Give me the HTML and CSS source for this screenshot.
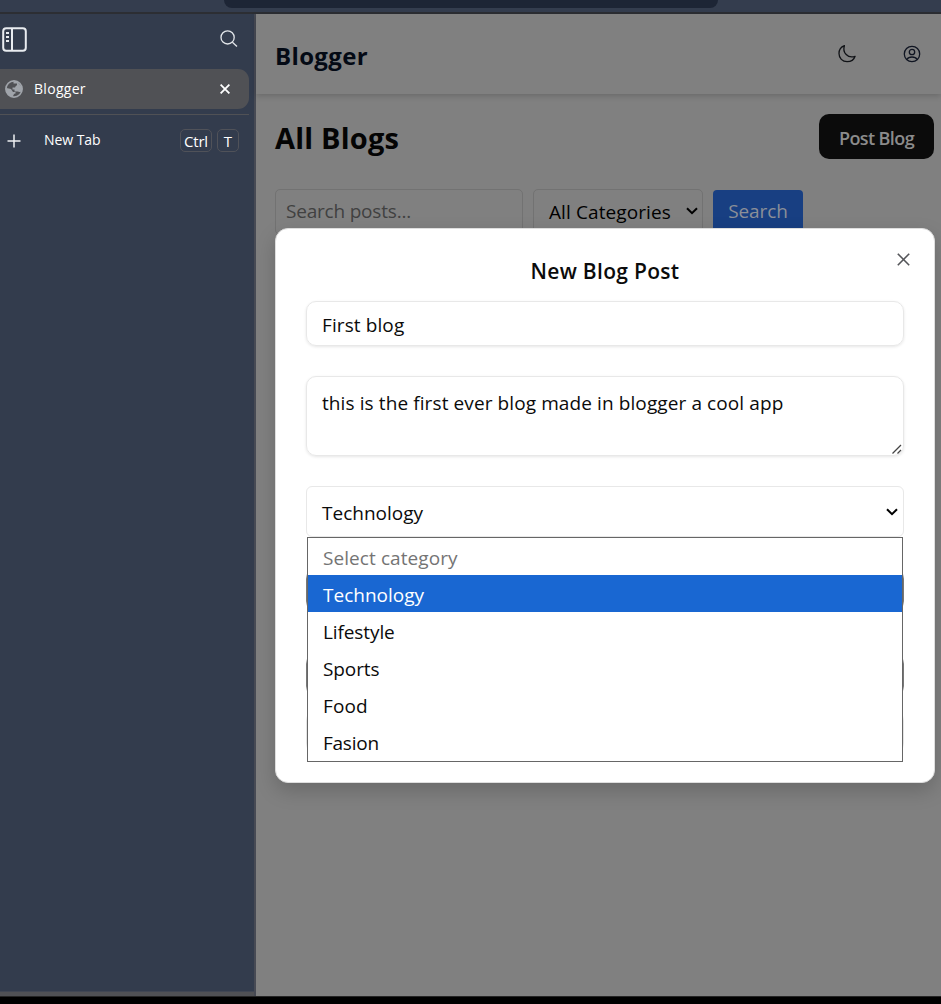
FILE: index.html
```html
<!DOCTYPE html>
<html lang="en">
<head>
<meta charset="utf-8">
<title>Blogger</title>
<link rel="stylesheet" href="styles.css">
</head>
<body>
<div class="topbar"><div class="address"></div></div>
<div class="window">
  <aside class="sidebar">
    <div class="side-tools">
      <svg class="panel-icon" width="26" height="26" viewBox="0 0 26 26" fill="none" stroke="#e9ecf0"><rect x="1.2" y="1.2" width="22.600" height="22.600" rx="3" stroke-width="2"/><path d="M10 1.500v22.500" stroke-width="2"/><path d="M4 6h3M4 10h3M4 14h3" stroke-width="2"/></svg>
      <svg class="search-icon" width="18" height="18" viewBox="0 0 18 18" fill="none" stroke="#e3e6ea" stroke-width="1.3"><circle cx="7.6" cy="7.4" r="6.6"/><path d="M12.4 12.2l4.6 4.3"/></svg>
    </div>
    <div class="tab">
      <svg width="18" height="18" viewBox="0 0 18 18"><circle cx="9" cy="9" r="8.1" fill="#505155" stroke="#a0a4aa" stroke-width="1.7"/><path d="M8.5 1L12 1.5L17 7V11C15 13 14 11.500 12 11.500H9.500V9.500H7.500V7.500H9.500C11 7.500 10 5.500 12 5.500V3.500H8.500ZM1.500 8L6 9L8 12H10.500V13.500C8.500 13.500 9 15 7.500 17C3.500 16 1 13 1 9Z" fill="#a0a4aa"/></svg>
      <span class="tab-name">Blogger</span>
      <svg class="tab-close" width="10" height="10" viewBox="0 0 10 10" stroke="#fff" stroke-width="1.8"><path d="M.6.6l8.800 8.800M9.400.6L.6 9.400"/></svg>
    </div>
    <div class="new-tab">
      <svg width="14" height="14" viewBox="0 0 14 14" stroke="#eef0f2" stroke-width="1.5"><path d="M7 .5v13M.5 7h13"/></svg>
      <span class="new-tab-name">New Tab</span>
      <kbd class="key key-ctrl">Ctrl</kbd><kbd class="key key-t">T</kbd>
    </div>
    <div class="side-foot"></div>
  </aside>
  <main class="page">
    <header class="header">
      <div class="brand">Blogger</div>
      <div class="header-icons">
        <svg width="20" height="20" viewBox="0 0 20 20" fill="none" stroke="#101216" stroke-width="1.3" stroke-linejoin="round"><path d="M7.400 1.700C4 3 2 5.600 2 9.500C2 14.200 5.400 17.700 10.100 17.700C13.700 17.700 17 15.700 18.100 12.300C14.500 13.500 11.400 12.800 9.200 10.500C6.900 8.200 6.300 5 7.400 1.700Z"/></svg>
        <svg width="18" height="18" viewBox="0 0 18 18" fill="none" stroke="#101522" stroke-width="1.3"><circle cx="9" cy="9" r="7.700"/><circle cx="9" cy="7" r="2.700"/><path d="M3.800 14.500C5 12.600 6.900 12 9 12s4 .6 5.200 2.500"/></svg>
      </div>
    </header>
    <section class="content">
      <div class="title-row">
        <h1 class="heading">All Blogs</h1>
        <div class="post-button"><span>Post Blog</span></div>
      </div>
      <div class="filters">
        <div class="search-field"><span>Search posts...</span></div>
        <div class="category-field"><span>All Categories</span><svg width="12" height="8" viewBox="0 0 12 8" fill="none" stroke="#000" stroke-width="2"><path d="M1 1.200l5 5 5-5"/></svg></div>
        <div class="search-button"><span>Search</span></div>
      </div>
    </section>
    <div class="modal">
      <svg class="modal-close" width="13" height="13" viewBox="0 0 13 13" stroke="#55565a" stroke-width="1.6"><path d="M.8.8l11.400 11.400M12.200.8L.8 12.200"/></svg>
      <h2 class="modal-title"><span>New Blog Post</span></h2>
      <div class="input"><span class="t-first">First blog</span></div>
      <div class="textarea"><span class="t-body">this is the first ever blog made in blogger a cool app</span>
        <svg class="grip" width="10" height="10" viewBox="0 0 10 10" stroke="#444" stroke-width="1.300"><path d="M.5 9.500l8.500-8.500M5.500 9.500l3.500-3.500"/></svg>
      </div>
      <div class="select"><span class="t-tech">Technology</span><svg width="12" height="8" viewBox="0 0 12 8" fill="none" stroke="#000" stroke-width="2"><path d="M1 1.200l5 5 5-5"/></svg></div>
      <div class="control"></div>
      <div class="control control-second"></div>
      <div class="control control-last"></div>
      <div class="options">
        <div class="option muted"><span class="t-select">Select category</span></div>
        <div class="option active"><span class="t-tech">Technology</span></div>
        <div class="option"><span class="t-life">Lifestyle</span></div>
        <div class="option"><span class="t-sports">Sports</span></div>
        <div class="option"><span class="t-food">Food</span></div>
        <div class="option"><span class="t-fasion">Fasion</span></div>
      </div>
    </div>
  </main>
</div>
<div class="bottom"></div>
</body>
</html>
```
FILE: styles.css
```css
* { box-sizing: border-box; }
body { margin: 0; width: 941px; height: 1004px; overflow: hidden; display: flex; flex-direction: column; background: #000; font-family: "Open Sans", "Noto Sans", sans-serif; font-size: 19px; }
svg { display: block; flex: none; }
span, .brand, .heading { white-space: nowrap; }
.topbar { height: 14px; flex: none; background: #343d4e; border-bottom: 2px solid #2c2e33; }
.address { width: 494px; height: 8px; margin-left: 224px; background: #1d2535; border-radius: 0 0 9px 9px; }
.window { height: 982px; flex: none; display: flex; }
.sidebar { width: 256px; flex: none; display: flex; flex-direction: column; background: #333c4d; color: #fff; font-size: 14px; border-right: 2px solid #474a54; }
.side-tools { height: 55px; display: flex; justify-content: space-between; padding: 13px 16px 0 2px; }
.search-icon { margin-top: 3px; }
.tab { height: 40px; width: 249px; display: flex; align-items: center; padding: 0 19px 0 5px; background: #505155; border-radius: 0 11px 11px 0; }
.tab-name { margin: 0 0 2px 11px; letter-spacing: .3px; }
.tab-close { margin-left: auto; }
.new-tab { display: flex; align-items: center; width: 249px; height: 52px; margin-top: 5px; padding: 0 10px 0 7px; border-top: 1px solid #505155; }
.new-tab-name { margin: 0 0 2px 23px; letter-spacing: -.05px; }
.key { height: 23px; display: flex; align-items: center; justify-content: center; border: 1px solid #505259; border-radius: 5px; font: 15px/20px "Open Sans", sans-serif; }
.key-ctrl { width: 32px; margin-left: auto; letter-spacing: -.2px; }
.key-t { width: 22px; margin-left: 5px; }
.side-foot { height: 5px; margin-top: auto; background: #505155; border-top: 1px solid #414754; }
.page { flex: 1; min-width: 0; position: relative; background: #808080; }
.header { height: 80px; display: flex; align-items: center; justify-content: space-between; padding: 0 20px 0 19px; box-shadow: 0 2px 6px rgba(0,0,0,.18); }
.brand { font-size: 24px; font-weight: 700; color: #040a15; margin-top: 3px; letter-spacing: .35px; }
.header-icons { display: flex; align-items: center; gap: 46px; }
.content { padding: 20px 7px 0 19px; }
.title-row { display: flex; align-items: center; justify-content: space-between; }
.heading { margin: 3px 0 0; font-size: 29px; font-weight: 700; color: #040404; letter-spacing: .2px; line-height: 40px; }
.post-button { width: 115px; height: 45px; display: flex; align-items: center; justify-content: center; padding-top: 2px; background: #0b0b0b; color: #8b8b8b; border-radius: 10px; font-size: 18px; font-weight: 600; letter-spacing: -.6px; }
.filters { display: flex; gap: 10px; margin-top: 30px; }
.search-field, .category-field { height: 46px; border: 1px solid #727272; border-radius: 5px; display: flex; align-items: center; }
.search-field { width: 248px; padding: 0 10px 2px; color: #414141; letter-spacing: -.2px; }
.category-field { width: 170px; padding: 0 4px 0 15px; justify-content: space-between; letter-spacing: .1px; }
.category-field svg { margin-bottom: 3px; }
.search-button { width: 90px; height: 45px; margin-top: 1px; padding-bottom: 4px; display: flex; align-items: center; justify-content: center; background: #183f82; color: #8b8f98; border-radius: 4px; letter-spacing: -.1px; }
.modal { position: absolute; left: 19px; top: 214px; width: 660px; height: 555px; display: flex; flex-direction: column; padding: 26px 30px 0; background: #fff; border: 1px solid #dedede; border-radius: 13px; box-shadow: 0 8px 20px rgba(0,0,0,.18); color: #0b0b0b; }
.modal-close { position: absolute; right: 24px; top: 24px; }
.modal-title { margin: 0 0 15px; padding-top: 1px; height: 31px; font-size: 21px; line-height: 31px; font-weight: 600; text-align: center; letter-spacing: .3px; }
.input, .textarea, .select { flex: none; border: 1px solid #e8e8e8; border-radius: 10px; padding: 0 15px; display: flex; box-shadow: 0 1px 3px rgba(0,0,0,.1); }
.input { height: 45px; align-items: center; padding-top: 2px; letter-spacing: .1px; }
.textarea { position: relative; height: 80px; margin-top: 30px; padding-top: 13px; letter-spacing: .1px; }
.grip { position: absolute; right: 1px; bottom: 1px; }
.select { height: 51px; margin-top: 30px; padding-right: 5px; align-items: center; justify-content: space-between; border-radius: 6px; box-shadow: none; }
.select .t-tech { padding-top: 2px; }
.control { height: 46px; flex: none; margin-top: 30px; border: 1px solid #777; border-radius: 12px; }
.control-second { margin-top: 39px; }
.control-last { margin-top: 11px; border-color: #e4e4e4; }
.options { position: absolute; left: 31px; top: 308px; width: 596px; height: 225px; border: 1px solid #666; background: #fff; }
.option { height: 37px; padding: 3px 0 0 15px; line-height: 34px; }
.muted { color: #747474; }
.t-select { letter-spacing: .08px; }
.t-life, .t-sports { letter-spacing: -.1px; }
.t-fasion { letter-spacing: -.25px; }
.t-food { letter-spacing: .15px; }
.active { background: #1967d2; color: #fff; }
.bottom { height: 8px; background: #000; border-top: 1px solid #252525; }
```
